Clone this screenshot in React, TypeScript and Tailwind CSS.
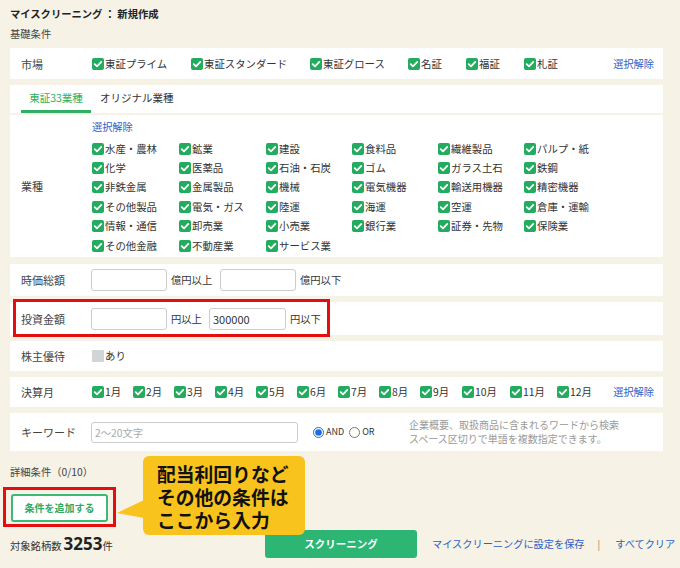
import React from "react";

const MARKETS = [
  { label: "東証プライム", w: "w-[99px]" },
  { label: "東証スタンダード", w: "w-[119px]" },
  { label: "東証グロース", w: "w-[98px]" },
  { label: "名証", w: "w-[58px]" },
  { label: "福証", w: "w-[58px]" },
  { label: "札証", w: "w-[58px]" },
];

const INDUSTRIES = [
  "水産・農林", "鉱業", "建設", "食料品", "繊維製品", "パルプ・紙",
  "化学", "医薬品", "石油・石炭", "ゴム", "ガラス土石", "鉄鋼",
  "非鉄金属", "金属製品", "機械", "電気機器", "輸送用機器", "精密機器",
  "その他製品", "電気・ガス", "陸運", "海運", "空運", "倉庫・運輸",
  "情報・通信", "卸売業", "小売業", "銀行業", "証券・先物", "保険業",
  "その他金融", "不動産業", "サービス業",
];

const MONTHS = [
  { label: "1月", w: "w-[41px]" },
  { label: "2月", w: "w-[41px]" },
  { label: "3月", w: "w-[41px]" },
  { label: "4月", w: "w-[41px]" },
  { label: "5月", w: "w-[41px]" },
  { label: "6月", w: "w-[41px]" },
  { label: "7月", w: "w-[41px]" },
  { label: "8月", w: "w-[41px]" },
  { label: "9月", w: "w-[42px]" },
  { label: "10月", w: "w-[48px]" },
  { label: "11月", w: "w-[47px]" },
  { label: "12月", w: "w-[47px]" },
];

function Check({ on = true }: { on?: boolean }) {
  if (!on) return <span className="h-[12px] w-[12px] shrink-0 rounded-[1px] bg-[#d2d5d7]" />;
  return (
    <span className="flex h-[12px] w-[12px] shrink-0 items-center justify-center rounded-[2px] bg-[#23ab5f]">
      <svg viewBox="0 0 12 12" className="h-[12px] w-[12px]">
        <path d="M2.7 6.1 L5 8.4 L9.3 3.9" fill="none" stroke="#fff" strokeWidth="1.8" strokeLinecap="round" strokeLinejoin="round" />
      </svg>
    </span>
  );
}

function CheckItem({ label, className = "" }: { label: string; className?: string }) {
  return (
    <label className={`flex items-center gap-[1px] whitespace-nowrap text-[10.4px] leading-[14px] text-[#333] ${className}`}>
      <Check />
      <span>{label}</span>
    </label>
  );
}

function RowLabel({ children }: { children: React.ReactNode }) {
  return <div className="w-[70px] shrink-0 text-[11px] leading-[16px] text-[#444]">{children}</div>;
}

function TextBox({ value = "", w = "w-[76px]" }: { value?: string; w?: string }) {
  return (
    <input
      readOnly
      value={value}
      className={`h-[22px] ${w} rounded-[3px] border border-[#ccc] bg-white px-[3px] text-[11px] text-[#333] outline-none`}
    />
  );
}

const link = "whitespace-nowrap text-[10.2px] leading-[14px] text-[#2b62c6]";

export default function App() {
  return (
    <div className="relative h-[568px] w-[680px] overflow-hidden bg-[#f6f2e6] font-['Noto_Sans_CJK_JP',sans-serif] text-[#333]">
      <div className="ml-[10px] w-[653px]">
        <div className="h-[48px] pt-[6px]">
          <h1 className="whitespace-nowrap text-[10.3px] font-bold leading-[16px] text-[#222]">マイスクリーニング ： 新規作成</h1>
          <p className="mt-[4px] text-[10.3px] leading-[16px] text-[#444]">基礎条件</p>
        </div>

        {/* 市場 */}
        <div className="flex h-[31px] items-center bg-white pl-[11px] pr-[9px]">
          <RowLabel>市場</RowLabel>
          <div className="flex pl-[1px]">
            {MARKETS.map((m) => (
              <CheckItem key={m.label} label={m.label} className={m.w} />
            ))}
          </div>
          <a className={`ml-auto ${link}`}>選択解除</a>
        </div>

        {/* tabs */}
        <div className="mt-[6px] flex h-[28px] bg-white pl-[11px]">
          <div className="h-[28px] w-[70px] border-b-[3px] border-[#2fb066] pt-[5px] text-center text-[10.5px] leading-[16px] text-[#2fae5b]">
            東証33業種
          </div>
          <div className="ml-[9px] pt-[5px] text-[10.5px] leading-[16px] text-[#333]">オリジナル業種</div>
        </div>

        {/* 業種 */}
        <div className="mt-[2px] flex h-[142px] bg-white pl-[11px]">
          <div className="flex items-center">
            <RowLabel>業種</RowLabel>
          </div>
          <div className="pt-[5px] pl-[1px]">
            <a className={`block ${link}`}>選択解除</a>
            <div className="mt-[5px] grid auto-rows-[19.4px] grid-cols-[87px_87px_86px_86px_86px_86px] items-center">
              {INDUSTRIES.map((name) => (
                <CheckItem key={name} label={name} />
              ))}
            </div>
          </div>
        </div>

        {/* 時価総額 */}
        <div className="mt-[7px] flex h-[32px] items-center bg-white pl-[11px] text-[10.3px]">
          <RowLabel>時価総額</RowLabel>
          <TextBox />
          <span className="ml-[4px] w-[49px]">億円以上</span>
          <TextBox />
          <span className="ml-[4px]">億円以下</span>
        </div>

        {/* 投資金額 */}
        <div className="relative mt-[6px] flex h-[33px] items-center bg-white pl-[11px] text-[10.3px]">
          <RowLabel>投資金額</RowLabel>
          <TextBox />
          <span className="ml-[4px] w-[38px]">円以上</span>
          <TextBox value="300000" w="w-[77px]" />
          <span className="ml-[4px]">円以下</span>
          <div className="absolute left-[3px] top-[-3px] h-[38px] w-[317px] border-[3px] border-[#e50d0d]" />
        </div>

        {/* 株主優待 */}
        <div className="mt-[6px] flex h-[30px] items-center bg-white pl-[11px]">
          <RowLabel>株主優待</RowLabel>
          <label className="flex items-center gap-[1px] pl-[1px] text-[10.4px]">
            <Check on={false} />
            <span>あり</span>
          </label>
        </div>

        {/* 決算月 */}
        <div className="mt-[6px] flex h-[30px] items-center bg-white pl-[11px] pr-[9px]">
          <RowLabel>決算月</RowLabel>
          <div className="flex pl-[1px]">
            {MONTHS.map((m) => (
              <CheckItem key={m.label} label={m.label} className={m.w} />
            ))}
          </div>
          <a className={`ml-auto ${link}`}>選択解除</a>
        </div>

        {/* キーワード */}
        <div className="mt-[6px] flex h-[38px] items-center bg-white pl-[11px]">
          <RowLabel>キーワード</RowLabel>
          <input
            readOnly
            placeholder="2〜20文字"
            className="h-[21px] w-[207px] rounded-[3px] border border-[#ccc] bg-white px-[3px] text-[10.3px] outline-none placeholder:text-[#aaa]"
          />
          <div className="flex w-[111px] items-center pl-[15px] text-[9px] text-[#333]">
            <input type="radio" checked readOnly className="m-0 h-[11px] w-[11px] accent-[#1a6fe0]" />
            <span className="ml-[2px]">AND</span>
            <input type="radio" readOnly className="m-0 ml-[5px] h-[11px] w-[11px]" />
            <span className="ml-[2px]">OR</span>
          </div>
          <div className="text-[10px] text-[#9a9a9a]">
            <p className="leading-[14px]">企業概要、取扱商品に含まれるワードから検索</p>
            <p className="leading-[14px]">スペース区切りで単語を複数指定できます。</p>
          </div>
        </div>

        {/* 詳細条件 */}
        <div className="relative">
          <p className="mt-[13px] text-[10.3px] leading-[16px] text-[#444]">詳細条件（0/10）</p>
          <div className="relative mt-[13px] w-[98px] pl-[1px]">
            <button className="h-[28px] w-[97px] rounded-[3px] border-2 border-[#3cb878] bg-white text-[10px] font-bold text-[#2fa862]">
              条件を追加する
            </button>
            <div className="absolute left-[-7px] top-[-6px] h-[40px] w-[113px] border-[3px] border-[#e50d0d]" />
          </div>

          <div className="mt-[8px] flex h-[28px] items-center whitespace-nowrap">
            <div className="flex w-[255px] shrink-0 items-baseline text-[10.3px] text-[#333]">
              <span>対象銘柄数</span>
              <span className="ml-[2px] font-['Open_Sans',sans-serif] text-[17px] font-bold leading-[20px] text-[#222]">3253</span>
              <span>件</span>
            </div>
            <button className="h-[28px] w-[152px] shrink-0 rounded-[3px] bg-[#2db673] text-[10.5px] font-bold text-white">
              スクリーニング
            </button>
            <a className={`ml-[15px] shrink-0 ${link}`}>マイスクリーニングに設定を保存</a>
            <span className="ml-[13px] shrink-0 text-[10px] text-[#a0805a]">|</span>
            <a className={`ml-[15px] shrink-0 ${link}`}>すべてクリア</a>
          </div>

          <div className="absolute left-[133px] top-[-8px] z-10 h-[79px] w-[162px] rounded-[6px] bg-[#f8c31d] pl-[14px] pt-[6px]">
            <svg className="absolute left-[-26px] top-0" width="27" height="79" viewBox="0 0 27 79">
              <polygon points="27,44 0,57 27,62" fill="#f8c31d" />
            </svg>
            <div className="text-[18.8px] font-bold text-[#111]">
              <p className="h-[23px] leading-[23px]">配当利回りなど</p>
              <p className="h-[23px] leading-[23px]">その他の条件は</p>
              <p className="h-[23px] leading-[23px]">ここから入力</p>
            </div>
          </div>
        </div>
      </div>
    </div>
  );
}
